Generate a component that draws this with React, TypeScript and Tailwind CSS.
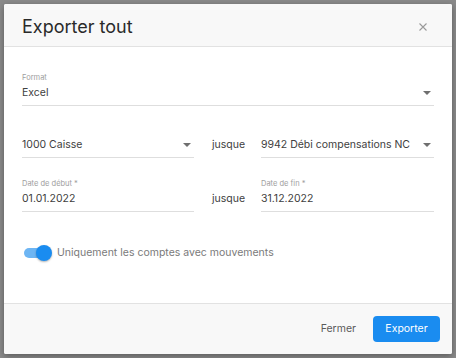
import React from 'react';

function Caret() {
  return (
    <svg width="8" height="4" viewBox="0 0 8 4" className="shrink-0">
      <path d="M0 0 L8 0 L4 4 Z" fill="#6f6f6f" />
    </svg>
  );
}

function SelectField({ label, value, className = '' }: { label?: string; value: string; className?: string }) {
  return (
    <div className={`flex flex-col ${className}`}>
      {label && <span className="text-[7.5px] leading-[10px] text-[#9e9e9e] mb-[3px]">{label}</span>}
      <div className="flex items-center justify-between border-b border-[#dedede] pb-[5px] pr-[3px]">
        <span className="text-[10.5px] leading-[14px] text-[#404040] whitespace-nowrap">{value}</span>
        <Caret />
      </div>
    </div>
  );
}

function TextField({ label, value, className = '' }: { label: string; value: string; className?: string }) {
  return (
    <div className={`flex flex-col ${className}`}>
      <span className="text-[7.5px] leading-[10px] text-[#9e9e9e] mb-[3px]">{label}</span>
      <div className="flex border-b border-[#dedede] pb-[5px]">
        <span className="text-[10.5px] leading-[14px] text-[#404040]">{value}</span>
      </div>
    </div>
  );
}

export default function App() {
  return (
    <div className="w-[456px] h-[358px] bg-[#8a8a8a] pt-[4px] pl-[4px]" style={{ fontFamily: 'Inter, "Noto Sans", sans-serif' }}>
      <div className="w-[448px] h-[350px] bg-white rounded-[2px] flex flex-col overflow-hidden shadow-[0_2px_6px_rgba(0,0,0,0.35)]">
        {/* Header */}
        <div className="h-[43px] bg-[#f8f8f8] border-b border-[#e2e2e2] flex items-center justify-between pt-[4px] pl-[18px] pr-[25px] shrink-0">
          <h1 className="text-[18px] leading-[24px] text-[#2a2a2a]">Exporter tout</h1>
          <svg width="8" height="8" viewBox="0 0 8 8">
            <path d="M0.5 0.5 L7.5 7.5 M7.5 0.5 L0.5 7.5" stroke="#9a9a9a" strokeWidth="1.1" />
          </svg>
        </div>

        {/* Body */}
        <div className="flex-1 px-[18px] pt-[26px]">
          <SelectField label="Format" value="Excel" />

          <div className="flex items-end mt-[32px]">
            <SelectField value="1000 Caisse" className="w-[172px]" />
            <span className="w-[67px] pl-[18px] text-[10.5px] leading-[14px] text-[#404040] pb-[6px]">jusque</span>
            <SelectField value="9942 Débi compensations NC" className="flex-1" />
          </div>

          <div className="flex items-end mt-[21px]">
            <TextField label="Date de début *" value="01.01.2022" className="w-[172px]" />
            <span className="w-[67px] pl-[18px] text-[10.5px] leading-[14px] text-[#404040] pb-[6px]">jusque</span>
            <TextField label="Date de fin *" value="31.12.2022" className="flex-1" />
          </div>

          <div className="flex items-center mt-[33px] pl-[2px]">
            <div className="relative w-[28px] h-[16px] flex items-center">
              <div className="w-[20px] h-[10px] rounded-full bg-[#6db5f3]" />
              <div className="absolute left-[12px] w-[16px] h-[16px] rounded-full bg-[#1a8cf0] shadow-[0_1px_2px_rgba(0,0,0,0.3)]" />
            </div>
            <span className="ml-[5px] text-[10.5px] leading-[14px] text-[#7a7a7a]">Uniquement les comptes avec mouvements</span>
          </div>
        </div>

        {/* Footer */}
        <div className="h-[51px] bg-[#f8f8f8] border-t border-[#e2e2e2] flex items-center justify-end pr-[12px] shrink-0">
          <button className="text-[10.5px] text-[#5a5a5a] mr-[17px]">Fermer</button>
          <button className="h-[26px] w-[67px] rounded-[4px] bg-[#1a8cf0] text-white text-[10.5px]">Exporter</button>
        </div>
      </div>
    </div>
  );
}
